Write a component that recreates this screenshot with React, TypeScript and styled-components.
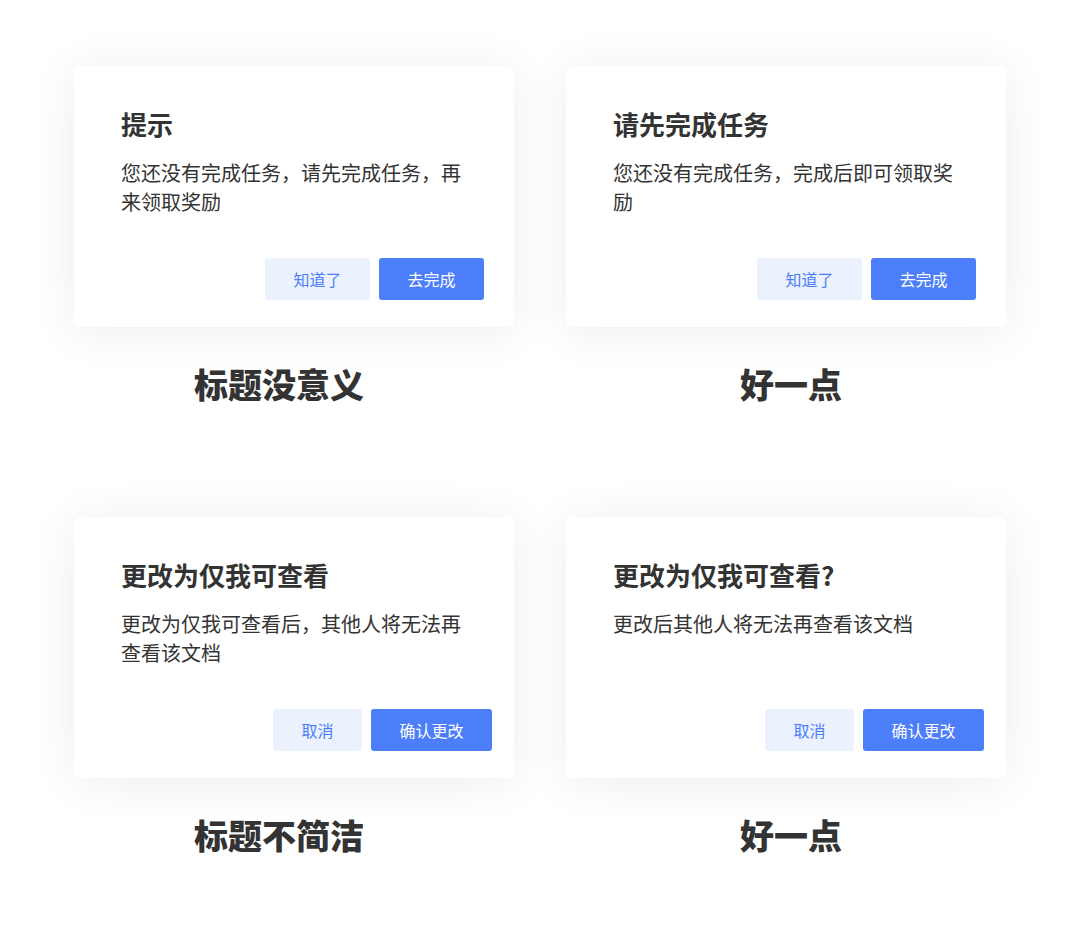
import React from "react";
import styled, { createGlobalStyle } from "styled-components";

const GlobalStyle = createGlobalStyle`
  html, body {
    margin: 0;
    padding: 0;
    background: #ffffff;
  }
  body {
    font-family: "Noto Sans CJK SC", "Noto Sans", sans-serif;
    color: #333333;
  }
`;

const Page = styled.div`
  display: grid;
  grid-template-columns: 440px 440px;
  align-content: start;
  column-gap: 52px;
  row-gap: 109px;
  padding: 66px 0 0 74px;
  width: 1080px;
  height: 929px;
  box-sizing: border-box;
`;

const Cell = styled.div`
  display: flex;
  flex-direction: column;
`;

const Card = styled.div`
  width: 440px;
  height: 261px;
  box-sizing: border-box;
  background: #ffffff;
  border-radius: 6px;
  box-shadow: 0 4px 48px rgba(0, 0, 0, 0.075);
  display: flex;
  flex-direction: column;
  padding: 40px 47px 27px 47px;
`;

const Title = styled.div`
  font-size: 26px;
  line-height: 36px;
  font-weight: 700;
  color: #333333;
`;

const Body = styled.div`
  margin-top: 16px;
  font-size: 20px;
  line-height: 29px;
  color: #333333;
  max-width: 350px;
`;

const Footer = styled.div<{ $right: number }>`
  margin-top: auto;
  display: flex;
  justify-content: flex-end;
  gap: 9px;
  margin-right: ${(p) => p.$right - 47}px;
`;

const Button = styled.button<{ $primary?: boolean }>`
  height: 42px;
  padding: 0 28.5px;
  border: none;
  border-radius: 3px;
  font-family: "Noto Sans CJK SC", "Noto Sans", sans-serif;
  font-size: 16px;
  line-height: 42px;
  cursor: pointer;
  background: ${(p) => (p.$primary ? "#4b7ef8" : "#ebf2fe")};
  color: ${(p) => (p.$primary ? "#ffffff" : "#4b7ef8")};
`;

const Caption = styled.div<{ $shift: number }>`
  margin-top: 33px;
  height: 48px;
  line-height: 48px;
  font-size: 34px;
  font-weight: 900;
  color: #333333;
  text-align: center;
  transform: translateX(${(p) => p.$shift}px);
`;

type Item = {
  title: string;
  body: string;
  secondary: string;
  primary: string;
  right: number;
  caption: string;
  shift: number;
};

const items: Item[] = [
  {
    title: "提示",
    body: "您还没有完成任务，请先完成任务，再来领取奖励",
    secondary: "知道了",
    primary: "去完成",
    right: 30,
    caption: "标题没意义",
    shift: -15,
  },
  {
    title: "请先完成任务",
    body: "您还没有完成任务，完成后即可领取奖励",
    secondary: "知道了",
    primary: "去完成",
    right: 30,
    caption: "好一点",
    shift: 5,
  },
  {
    title: "更改为仅我可查看",
    body: "更改为仅我可查看后，其他人将无法再查看该文档",
    secondary: "取消",
    primary: "确认更改",
    right: 22,
    caption: "标题不简洁",
    shift: -15,
  },
  {
    title: "更改为仅我可查看?",
    body: "更改后其他人将无法再查看该文档",
    secondary: "取消",
    primary: "确认更改",
    right: 22,
    caption: "好一点",
    shift: 5,
  },
];

export default function App() {
  return (
    <>
      <GlobalStyle />
      <Page>
        {items.map((it, i) => (
          <Cell key={i}>
            <Card>
              <Title>{it.title}</Title>
              <Body>{it.body}</Body>
              <Footer $right={it.right}>
                <Button>{it.secondary}</Button>
                <Button $primary>{it.primary}</Button>
              </Footer>
            </Card>
            <Caption $shift={it.shift}>{it.caption}</Caption>
          </Cell>
        ))}
      </Page>
    </>
  );
}
